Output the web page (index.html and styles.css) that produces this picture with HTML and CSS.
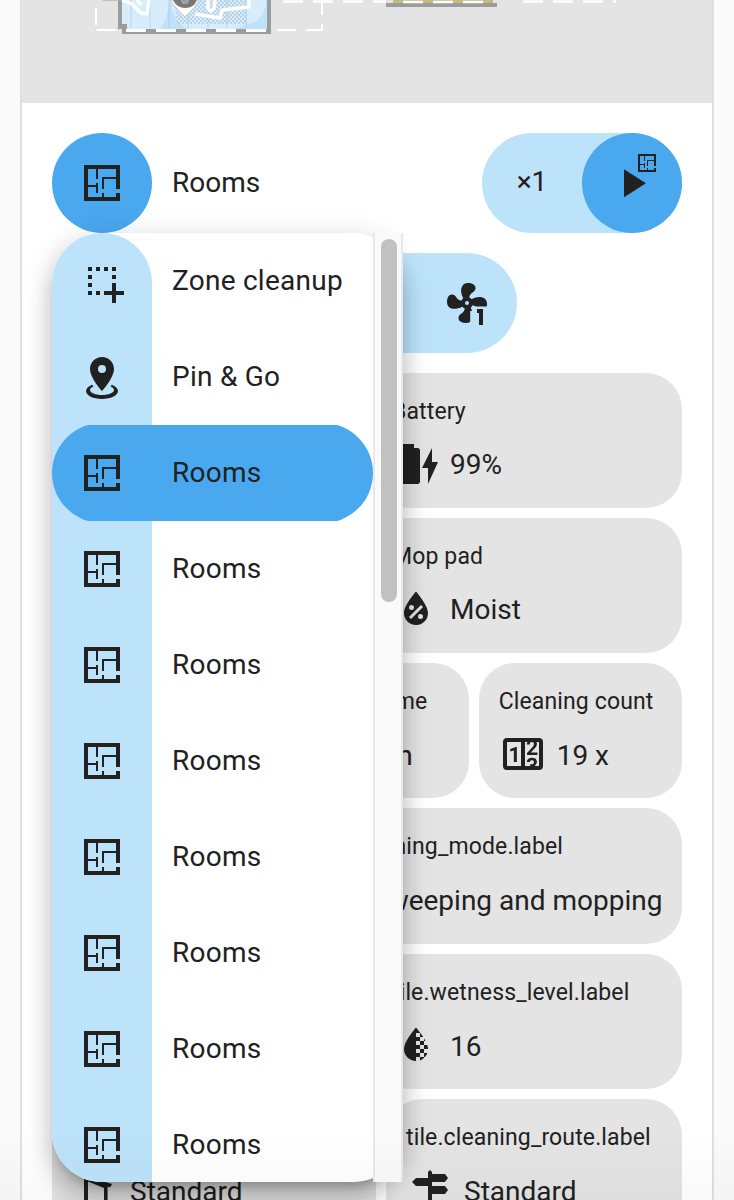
FILE: index.html
```html
<!DOCTYPE html>
<html lang="en">
<head>
  <meta charset="UTF-8" />
  <meta name="viewport" content="width=device-width, initial-scale=1.0"/>
  <title>Vacuum Card</title>
  <link rel="stylesheet" href="styles.css">
</head>
<body>

<!-- Shared icons -->
<svg class="sprite">
  <symbol id="floor-plan" viewBox="0 0 24 24">
    <path d="M10 5V10H9V5H5V13H9V12H10V17H9V14H5V19H12V17H13V19H19V17H21V21H3V3H21V15H19V10H13V15H12V9H19V5H10Z"/>
  </symbol>
</svg>

<div class="card">

  <!-- Map -->
  <svg class="map" viewBox="22 0 690 103">
    <defs>
      <pattern id="dots" width="4" height="4" patternUnits="userSpaceOnUse">
        <path d="M0 0h2v2h-2zM2 2h2v2h-2z" fill="#b9d3e5"/>
      </pattern>
    </defs>
    <path d="M118 0H271V34H122V29H118Z" fill="#9c9c9c"/>
    <path d="M103 0H119" stroke="#bdbdbd" stroke-width="2"/>
    <path d="M122 0H267V29H127V24H122Z" fill="#bde2fa"/>
    <path d="M122 0H169Q168 19 160 29H127V24H122ZM171 0H266Q265 22 245 25L236 29H188Q172 22 171 0Z" fill="#d8edfc"/>
    <path d="M174 0H247V24H177Z" fill="url(#dots)"/>
    <path d="M131 0V28M150 0V28M169 0V28M188 0V28M208 0V28M227 0V28M246 0V28" stroke="#a6cce5" stroke-width="1" opacity=".7"/>
    <path d="M122 0L132 4L141 13L147 14L149 0M137 0L141 5M208 0Q207 11 211 11Q215 10 215 0M195 14L220 18L222 10L249 7V0" fill="none" stroke="#fff" stroke-width="3.5" stroke-linejoin="round"/>
    <path d="M171 0Q173 6 185 17Q197 6 199 0Z" fill="#fff" stroke="#888" stroke-opacity=".4"/>
    <path d="M173 0Q177 8 185 8Q194 8 197 0Z" fill="#777"/>
    <path d="M181 1H189M182 3H188" stroke="#ccc"/>
    <path d="M126 30.5H266" stroke="#fff" stroke-width="3" stroke-dasharray="20 10"/>
    <path d="M96 8V25M96 30H116M277 30H296M306 30H322V24M322 0V15" fill="none" stroke="#fff" stroke-width="2"/>
    <path d="M283 1.5H386M523 1.5H616" stroke="#fff" stroke-width="2.5" stroke-dasharray="20 10"/>
    <path d="M386 5H497" stroke="#9c9c9c" stroke-width="4"/>
    <path d="M393 1.5H493" stroke="#c5b881" stroke-width="3"/>
    <path d="M403 2H493" stroke="#fff" stroke-width="2.5" stroke-dasharray="20 10"/>
  </svg>

  <div class="content">
    <!-- Mode and run buttons -->
    <div class="header">
      <div class="mode">
        <div class="circle"><svg class="icon"><use href="#floor-plan"/></svg></div>
        <span class="text">Rooms</span>
      </div>
      <div class="run">
        <span class="repeats">×1</span>
        <div class="circle play">
          <svg class="icon" viewBox="0 0 24 24"><path d="M8,5.14V19.14L19,12.14L8,5.14Z"/></svg>
          <svg class="icon small"><use href="#floor-plan"/></svg>
        </div>
      </div>
    </div>

    <div class="actions">
      <svg class="icon" viewBox="0 0 24 24">
        <clipPath id="fanClip"><path d="M0 0H24V13.7H15.3V16H13.6V24H0Z"/></clipPath>
        <path clip-path="url(#fanClip)" d="M12,11A1,1 0 0,0 11,12A1,1 0 0,0 12,13A1,1 0 0,0 13,12A1,1 0 0,0 12,11M12.5,2C17,2 17.11,5.57 14.75,6.75C13.76,7.24 13.32,8.29 13.13,9.22C13.61,9.42 14.03,9.73 14.35,10.13C18.05,8.13 22.03,8.92 22.03,12.5C22.03,17 18.46,17.1 17.28,14.73C16.78,13.74 15.72,13.3 14.79,13.11C14.59,13.59 14.28,14 13.88,14.34C15.87,18.03 15.08,22 11.5,22C7,22 6.91,18.42 9.27,17.24C10.25,16.75 10.69,15.71 10.89,14.79C10.4,14.59 9.97,14.27 9.65,13.87C5.96,15.85 2,15.07 2,11.5C2,7 5.56,6.89 6.74,9.26C7.24,10.25 8.29,10.68 9.22,10.87C9.41,10.39 9.73,9.97 10.14,9.65C8.15,5.96 8.94,2 12.5,2Z"/>
        <path d="M17 15H20V23H18V17H17Z"/>
      </svg>
    </div>

    <!-- Tiles -->
    <div class="tiles">
      <div class="row">
        <div class="tile"></div>
        <div class="tile w310">
          <div class="label">Battery</div>
          <div class="value">
            <svg class="icon" viewBox="0 0 24 24"><path d="M23,11H20V4L15,14H18V22M12.67,4H11V2H5V4H3.33A1.33,1.33 0 0,0 2,5.33V20.67C2,21.4 2.6,22 3.33,22H12.67A1.33,1.33 0 0,0 14,20.67V5.33A1.33,1.33 0 0,0 12.67,4Z"/></svg>
            <span>99%</span>
          </div>
        </div>
      </div>
      <div class="row">
        <div class="tile"></div>
        <div class="tile w310">
          <div class="label">Mop pad</div>
          <div class="value">
            <svg class="icon" viewBox="0 0 24 24"><path d="M12,3.25C12,3.25 6,10 6,14C6,17.32 8.69,20 12,20A6,6 0 0,0 18,14C18,10 12,3.25 12,3.25M14.47,9.97L15.53,11.03L9.53,17.03L8.47,15.97M9.75,10A1.25,1.25 0 0,1 11,11.25A1.25,1.25 0 0,1 9.75,12.5A1.25,1.25 0 0,1 8.5,11.25A1.25,1.25 0 0,1 9.75,10M14.25,14.5A1.25,1.25 0 0,1 15.5,15.75A1.25,1.25 0 0,1 14.25,17A1.25,1.25 0 0,1 13,15.75A1.25,1.25 0 0,1 14.25,14.5Z"/></svg>
            <span>Moist</span>
          </div>
        </div>
      </div>
      <div class="row">
        <div class="tile"></div>
        <div class="tile">
          <div class="label">Cleaning time</div>
          <div class="value"><div class="icon"></div><span>9 min</span></div>
        </div>
        <div class="tile">
          <div class="label">Cleaning count</div>
          <div class="value">
            <svg class="icon" viewBox="0 0 24 24"><path d="M4,4H20A2,2 0 0,1 22,6V18A2,2 0 0,1 20,20H4A2,2 0 0,1 2,18V6A2,2 0 0,1 4,4M4,6V18H11V6H4M20,18V6H18.76C19,6.54 18.95,7.07 18.95,7.13C18.88,7.8 18.41,8.5 18.24,8.75L15.91,11.3L19.23,11.28L19.24,12.5L14.04,12.47L14,11.47C14,11.47 17.05,8.24 17.2,7.95C17.34,7.67 17.91,6 16.5,6C15.27,6.05 15.41,7.3 15.41,7.3L13.87,7.31C13.87,7.31 13.88,6.65 14.25,6H13V18H15.58L15.57,17.14L16.54,17.13C16.54,17.13 17.45,16.97 17.46,16.08C17.5,15.08 16.65,15.08 16.5,15.08C16.37,15.08 15.43,15.13 15.43,15.95H13.91C13.91,15.95 13.95,13.89 16.5,13.89C19.1,13.89 18.96,15.91 18.96,15.91C18.96,15.91 19,17.16 17.85,17.63L18.37,18H20M8.92,16H7.42V10.2L5.62,10.76V9.53L8.76,8.41H8.92V16Z"/></svg>
            <span>19 x</span>
          </div>
        </div>
      </div>
      <div class="row tall">
        <div class="tile"></div>
        <div class="tile w389">
          <div class="label">tile.cleaning_mode.label</div>
          <div class="value"><div class="icon"></div><span>Sweeping and mopping</span></div>
        </div>
      </div>
      <div class="row">
        <div class="tile"></div>
        <div class="tile w310">
          <div class="label">tile.wetness_level.label</div>
          <div class="value">
            <svg class="icon" viewBox="0 0 24 24">
              <clipPath id="drop"><path d="M12,3.25C12,3.25 6,10 6,14C6,17.32 8.69,20 12,20A6,6 0 0,0 18,14C18,10 12,3.25 12,3.25"/></clipPath>
              <path clip-path="url(#drop)" d="M6 3H12V20H6ZM12 3H14V6H12ZM14 6H16V8H14ZM12 8H14V10H12ZM16 8H18V10H16ZM14 10H16V12H14ZM12 12H14V14H12ZM16 12H18V14H16ZM14 14H16V16H14ZM12 16H14V18H12ZM16 16H18V18H16ZM14 18H16V20H14Z"/>
            </svg>
            <span>16</span>
          </div>
        </div>
      </div>
      <div class="row">
        <div class="tile">
          <div class="label">&nbsp;</div>
          <div class="value">
            <svg class="icon" viewBox="0 0 24 24"><path d="M6 6H9L17.8 9.8V22H16V11L8 7.8V22H6ZM10 6L20 9L19 10.8L9 6.5Z"/></svg>
            <span>Standard</span>
          </div>
        </div>
        <div class="tile w296">
          <div class="label">tile.cleaning_route.label</div>
          <div class="value">
            <svg class="icon" viewBox="0 0 24 24"><path d="M11 3L12 2L13 3V4H19.5L21 6L19.5 8H13V10H19.5L21 12L19.5 14H13V22H11V10H5L3 8L5 6H11Z"/></svg>
            <span>Standard</span>
          </div>
        </div>
      </div>
    </div>

    <!-- Opened mode dropdown -->
    <div class="menu">
      <div class="list">
        <div class="item">
          <div class="inner">
            <svg class="icon" viewBox="0 0 24 24"><path d="M13,17H17V13H19V17H23V19H19V23H17V19H13V17M11,17V19H9V17H11M7,17V19H5V17H7M19,9V11H17V9H19M19,5V7H17V5H19M15,5V7H13V5H15M11,5V7H9V5H11M7,5V7H5V5H7M7,13V15H5V13H7M7,9V11H5V9H7Z"/></svg>
            <span class="text">Zone cleanup</span>
          </div>
        </div>
        <div class="item">
          <div class="inner">
            <svg class="icon" viewBox="0 0 24 24"><path d="M12,2C15.31,2 18,4.66 18,7.95C18,12.41 12,19 12,19C12,19 6,12.41 6,7.95C6,4.66 8.69,2 12,2M12,6A2,2 0 0,0 10,8A2,2 0 0,0 12,10A2,2 0 0,0 14,8A2,2 0 0,0 12,6M20,19C20,21.21 16.42,23 12,23C7.58,23 4,21.21 4,19C4,17.71 5.22,16.56 7.11,15.83L7.75,16.74C6.67,17.19 6,17.81 6,18.5C6,19.88 8.69,21 12,21C15.31,21 18,19.88 18,18.5C18,17.81 17.33,17.19 16.25,16.74L16.89,15.83C18.78,16.56 20,17.71 20,19Z"/></svg>
            <span class="text">Pin &amp; Go</span>
          </div>
        </div>
        <div class="item selected"><div class="inner"><svg class="icon"><use href="#floor-plan"/></svg><span class="text">Rooms</span></div></div>
        <div class="item"><div class="inner"><svg class="icon"><use href="#floor-plan"/></svg><span class="text">Rooms</span></div></div>
        <div class="item"><div class="inner"><svg class="icon"><use href="#floor-plan"/></svg><span class="text">Rooms</span></div></div>
        <div class="item"><div class="inner"><svg class="icon"><use href="#floor-plan"/></svg><span class="text">Rooms</span></div></div>
        <div class="item"><div class="inner"><svg class="icon"><use href="#floor-plan"/></svg><span class="text">Rooms</span></div></div>
        <div class="item"><div class="inner"><svg class="icon"><use href="#floor-plan"/></svg><span class="text">Rooms</span></div></div>
        <div class="item"><div class="inner"><svg class="icon"><use href="#floor-plan"/></svg><span class="text">Rooms</span></div></div>
        <div class="item"><div class="inner"><svg class="icon"><use href="#floor-plan"/></svg><span class="text">Rooms</span></div></div>
      </div>
      <div class="scrollbar"><div class="thumb"></div></div>
    </div>
  </div>
</div>

<div class="fade"></div>

</body>
</html>
```

FILE: styles.css
```css
* {
  box-sizing: border-box;
}

body {
  margin: 0;
  height: 1200px;
  overflow: hidden;
  background: #fafafa;
  color: #212121;
  font-family: Roboto, sans-serif;
  font-size: 28px;
}

.sprite {
  display: none;
}

.card {
  width: 694px;
  height: 1200px;
  margin-left: 20px;
  overflow: hidden;
  background: white;
  border: 2px solid #e0e0e0;
  border-width: 0 2px;
}

.map {
  display: block;
  width: 690px;
  height: 103px;
  background: #e4e4e4;
}

.content {
  position: relative;
  padding: 30px;
}

.icon {
  width: 48px;
  height: 48px;
  flex-shrink: 0;
  fill: #212121;
}

.header {
  display: flex;
  justify-content: space-between;
}

.mode {
  display: flex;
  align-items: center;
  gap: 20px;
}

.text {
  padding-bottom: 2px;
}

.circle {
  display: flex;
  align-items: center;
  justify-content: center;
  width: 100px;
  height: 100px;
  border-radius: 50%;
  background: #4aa8ef;
}

.run {
  display: flex;
  align-items: center;
  width: 200px;
  border-radius: 50px;
  background: #bde3fb;
}

.repeats {
  width: 100px;
  padding-bottom: 4px;
  text-align: center;
}

.play {
  position: relative;
}

.small {
  position: absolute;
  top: 18px;
  right: 23px;
  width: 24px;
  height: 24px;
}

.actions {
  display: flex;
  align-items: center;
  justify-content: flex-end;
  width: 465px;
  height: 100px;
  margin-top: 20px;
  padding-right: 26px;
  border-radius: 50px;
  background: #bde3fb;
}

.tiles {
  display: flex;
  flex-direction: column;
  gap: 10px;
  margin-top: 20px;
}

.row {
  display: flex;
  gap: 10px;
  height: 135px;
}

.tall {
  height: 136px;
}

.tile {
  flex: 1 1 0;
  min-width: 0;
  padding: 24px 20px 0;
  border-radius: 36px;
  background: #e4e4e4;
  white-space: nowrap;
}

.w296 {
  flex: 0 0 296px;
}

.w310 {
  flex: 0 0 310px;
}

.w389 {
  flex: 0 0 389px;
}

.label {
  font-size: 23px;
  line-height: 30px;
  letter-spacing: 0.13px;
}

.value {
  display: flex;
  align-items: center;
  gap: 10px;
  margin-top: 13px;
}

.row:nth-child(n+3) .value span {
  padding-top: 2px;
}

.menu {
  position: absolute;
  top: 130px;
  left: 30px;
  display: flex;
  width: 351px;
  height: 949px;
  border-radius: 50px;
  background: white;
  box-shadow: 0 10px 10px -6px rgba(0, 0, 0, 0.2), 0 16px 20px 2px rgba(0, 0, 0, 0.14), 0 6px 28px 4px rgba(0, 0, 0, 0.12);
}

.list {
  width: 321px;
  overflow: hidden;
  border-radius: 50px 0 0 50px;
  background: linear-gradient(#bde3fb, #bde3fb) 0 50px / 100px 100% no-repeat;
}

.item {
  display: flex;
  align-items: center;
  height: 96px;
  overflow: hidden;
}

.inner {
  display: flex;
  align-items: center;
  flex: 1;
  height: 100px;
  gap: 46px;
  padding-left: 26px;
  border-radius: 50px;
  letter-spacing: 0.25px;
}

/* round cap on top of the icon strip */
.item:first-child {
  width: 100px;
  overflow: visible;
  border-radius: 50px 50px 0 0;
  background: #bde3fb;
  white-space: nowrap;
}

.selected .inner {
  background: #4aa8ef;
}

.scrollbar {
  width: 30px;
  padding: 6px 0 0 6px;
  background: #fafafa;
  border: 2px solid #e8e8e8;
  border-width: 0 2px;
}

.thumb {
  width: 16px;
  height: 363px;
  border-radius: 8px;
  background: #c1c1c1;
}

/* soft shade at the bottom edge of the screen */
.fade {
  position: fixed;
  left: 0;
  right: 0;
  bottom: 0;
  height: 70px;
  background: linear-gradient(rgba(0, 0, 0, 0), rgba(0, 0, 0, 0.025));
  pointer-events: none;
}
```
